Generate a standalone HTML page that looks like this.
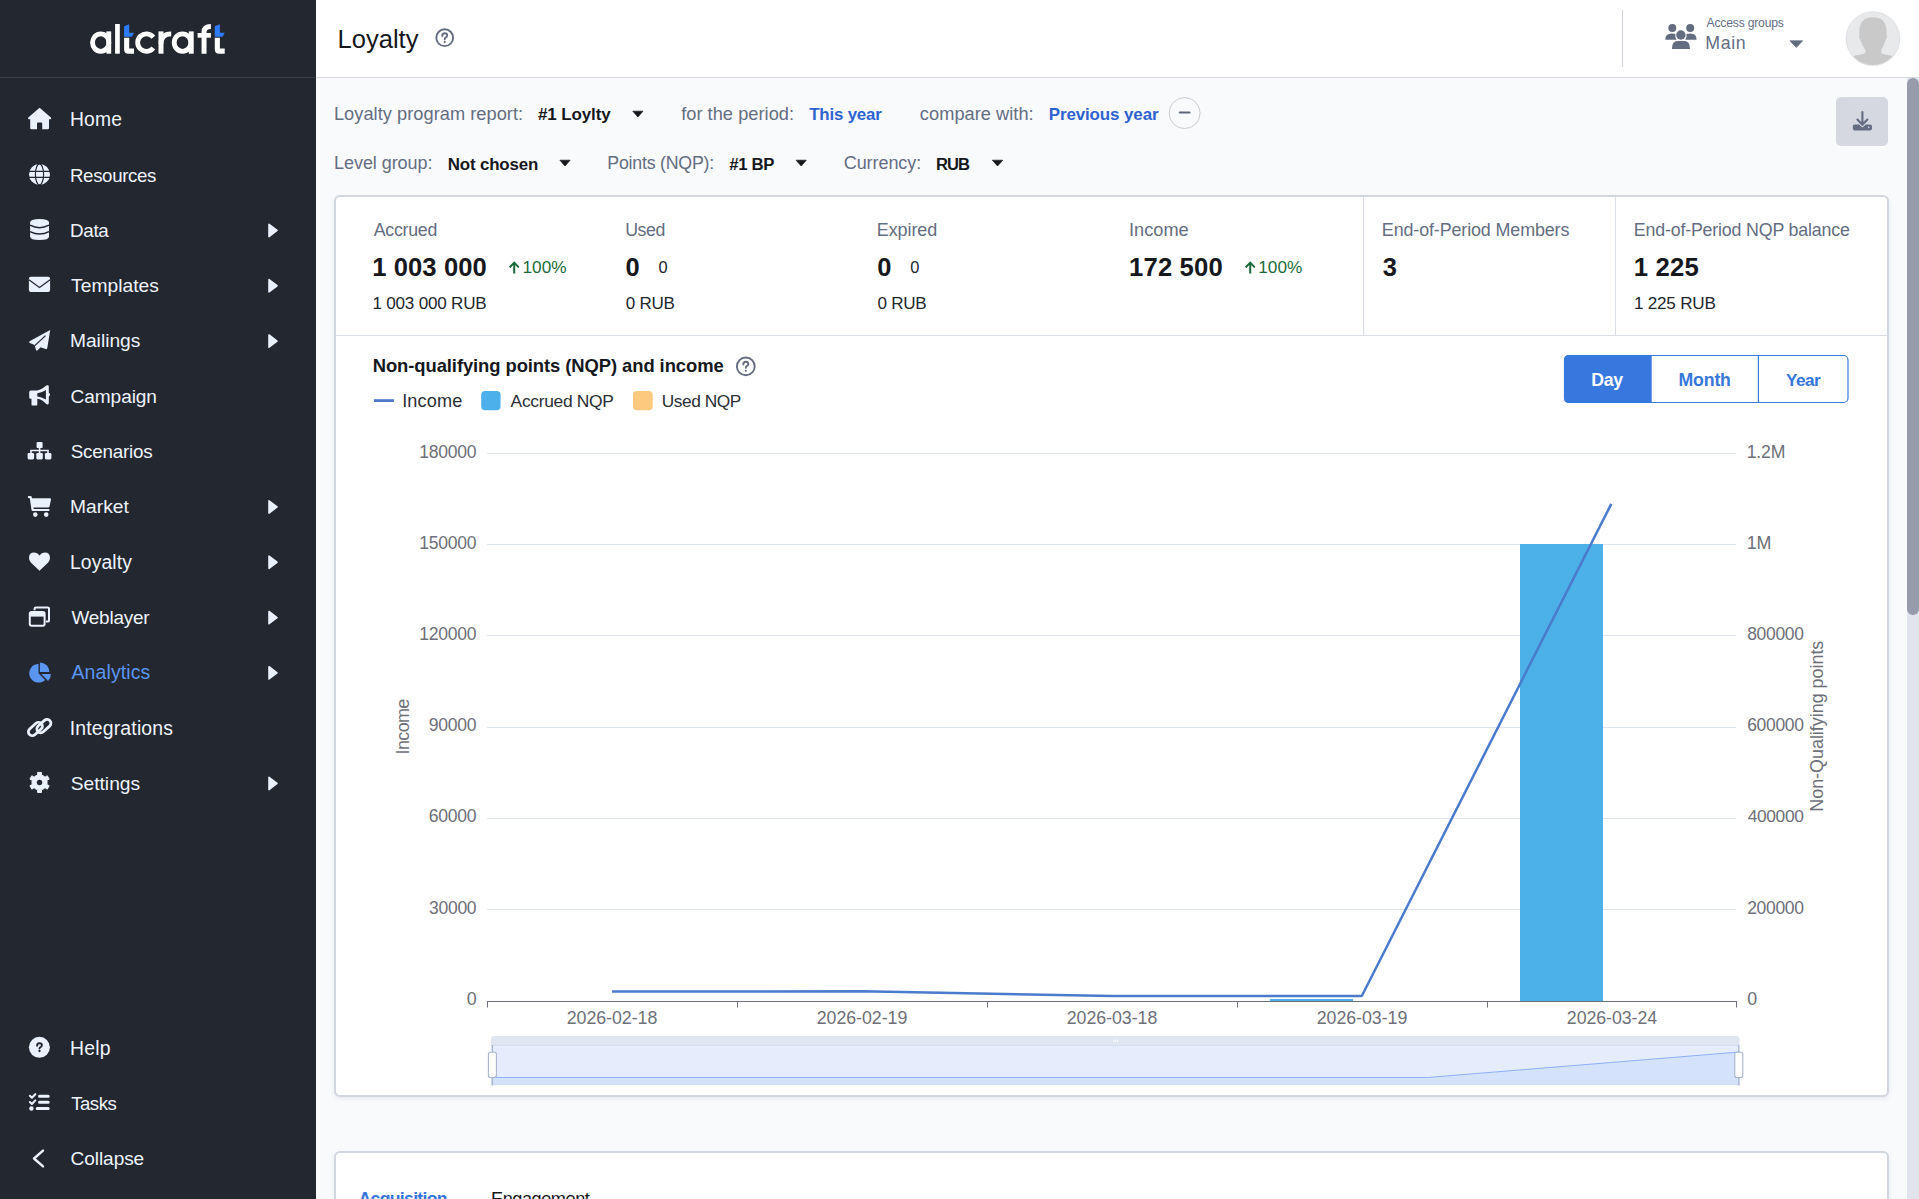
<!DOCTYPE html>
<html lang="en"><head><meta charset="utf-8"><title>Loyalty - Altcraft</title>
<style>
html,body{margin:0;padding:0;}
body{width:1919px;height:1199px;overflow:hidden;position:relative;background:#f9fafc;font-family:"Liberation Sans",sans-serif;}
.sidebar{position:absolute;left:0;top:0;width:316px;height:1199px;background:#232730;}
.sidebar .logo-sep{position:absolute;left:0;top:77px;width:316px;height:1px;background:#3b404b;}
.header{position:absolute;left:316px;top:0;width:1603px;height:77px;background:#fff;border-bottom:1px solid #d6d9e0;}
.dl-btn{position:absolute;left:1836px;top:97px;width:52px;height:49px;border-radius:5px;background:#d5d8e0;}
.card{position:absolute;left:334px;width:1551px;background:#fff;border:2px solid #d2d6de;border-radius:6px;box-shadow:0 2px 4px rgba(40,50,70,.08);}
.card.c1{top:195px;height:898px;}
.card.c2{top:1151px;height:200px;}
.scroll{position:absolute;left:1907px;top:78px;width:12px;height:1121px;background:#e1e4ec;}
.thumb{position:absolute;left:1907px;top:78px;width:12px;height:537px;border-radius:6px;background:#969cab;}
svg.layer{position:absolute;left:0;top:0;font-family:"Liberation Sans",sans-serif;}
</style></head>
<body>
<div class="sidebar"><div class="logo-sep"></div></div>
<div class="header"></div>
<div class="dl-btn"></div>
<div class="card c1"></div>
<div class="card c2"></div>
<div class="scroll"></div><div class="thumb"></div>
<svg class="layer" width="1919" height="1199" viewBox="0 0 1919 1199">
<g id="logo"><ellipse cx="100.7" cy="42.55" rx="8.2" ry="8.75" stroke="#fff" stroke-width="4.8" fill="none"/>
<rect x="106.4" y="31.4" width="4.8" height="22.3" fill="#fff"/>
<rect x="115.1" y="24" width="4.7" height="29.7" fill="#fff"/>
<path fill="#2f7bf7" d="M124.1,26.3 L129.2,24.2 L129.2,32.8 L134.0,32.8 L132.0,36.7 L124.1,36.7 Z"/>
<path fill="#fff" d="M124.1,37.7 L129.2,37.7 L129.2,48.6 L134.0,48.6 L134.0,53.7 L128.6,53.7 Q124.1,53.7 124.1,49.2 Z"/>
<path fill="#2f7bf7" d="M214.8,26.3 L219.9,24.2 L219.9,32.8 L224.70000000000002,32.8 L222.70000000000002,36.7 L214.8,36.7 Z"/>
<path fill="#fff" d="M214.8,37.7 L219.9,37.7 L219.9,48.6 L224.70000000000002,48.6 L224.70000000000002,53.7 L219.3,53.7 Q214.8,53.7 214.8,49.2 Z"/>
<path d="M153.30,37.16 A8.75,8.75 0 1 0 153.30,47.94" stroke="#fff" stroke-width="4.8" fill="none"/>
<rect x="158.5" y="31.4" width="5" height="22.3" fill="#fff"/>
<path d="M161,44 Q161,33.8 171.2,33.8" stroke="#fff" stroke-width="4.8" fill="none"/>
<ellipse cx="182.5" cy="42.55" rx="8.3" ry="8.75" stroke="#fff" stroke-width="4.8" fill="none"/>
<rect x="188.8" y="31.4" width="4.9" height="22.3" fill="#fff"/>
<path d="M204.05,53.7 L204.05,32 Q204.05,26.4 210.9,26.4" stroke="#fff" stroke-width="5" fill="none"/>
<rect x="197.6" y="33" width="13.3" height="4.7" fill="#fff"/></g>
<g id="icons"><path fill="#e9f1fd" d="M39.6,107.8 L50.9,117.6 Q51.7,118.6 50.6,119.2 L49,119.2 L49,128 Q49,129.2 47.8,129.2 L42.2,129.2 L42.2,123.5 Q42.2,122.5 41.2,122.5 L38,122.5 Q37,122.5 37,123.5 L37,129.2 L31.4,129.2 Q30.2,129.2 30.2,128 L30.2,119.2 L28.6,119.2 Q27.5,118.6 28.3,117.6 Z"/>
<circle cx="39.5" cy="174.4" r="10.5" fill="#e9f1fd"/>
<ellipse cx="39.5" cy="174.4" rx="4.1" ry="10.5" fill="none" stroke="#232730" stroke-width="1.15"/>
<path d="M28.0,171.4 L51.0,171.4 M28.0,177.3 L51.0,177.3" stroke="#232730" stroke-width="1.15" fill="none"/>
<path fill="#e9f1fd" d="M30.1,222.5 Q30.1,219 39.55,219 Q49,219 49,222.5 L49,236.5 Q49,240 39.55,240 Q30.1,240 30.1,236.5 Z"/>
<path d="M30.1,225.2 Q39.55,230.2 49,225.2 M30.1,231.6 Q39.55,236.6 49,231.6" stroke="#232730" stroke-width="1.5" fill="none"/>
<rect x="28.9" y="276.8" width="21.2" height="15.1" rx="2" fill="#e9f1fd"/>
<path d="M28.9,279.8 L39.5,287.6 L50.1,279.8" stroke="#232730" stroke-width="1.2" fill="none"/>
<path fill="#e9f1fd" d="M50.2,330 L29.6,341.3 Q28.4,342.4 29.8,343 L34.6,344.9 L36,350 Q36.6,351.2 37.6,350.3 L40.6,347.2 L45.6,349.1 Q47.1,349.4 47.3,348 Z"/>
<path d="M34.8,345.6 L45.5,335.6" stroke="#232730" stroke-width="1.3" fill="none"/>
<path fill="#e9f1fd" fill-rule="evenodd" d="M30.7,390.4 L37.1,390.4 Q42,389.8 46.3,385.6 Q47.2,384.9 48.1,385.3 Q48.8,385.7 48.8,386.6 L48.8,392.8 Q50,393.5 50,394.65 Q50,395.8 48.8,396.5 L48.8,403 Q48.8,404 48,404.4 Q47.1,404.7 46.3,404 Q42,399.3 37.3,398.7 L37.3,404.4 Q37.3,405.6 36.1,405.6 L32.7,405.6 Q31.5,405.6 31.5,404.4 L31.5,398.7 L30.7,398.7 Q29.2,398.7 29.2,397.2 L29.2,391.9 Q29.2,390.4 30.7,390.4 Z M37.3,393.3 Q41.5,392.8 45.9,389.9 L45.9,399.5 Q41.5,396.9 37.3,396.5 Z"/>
<rect x="36.6" y="441.9" width="6" height="6.2" rx="1.2" fill="#e9f1fd"/>
<path d="M39.6,448 L39.6,453 M31,453.5 L31,450.5 L48,450.5 L48,453.5" stroke="#e9f1fd" stroke-width="1.6" fill="none"/>
<rect x="27.6" y="452.9" width="6.5" height="6.5" rx="1.3" fill="#e9f1fd"/>
<rect x="36.3" y="452.9" width="6.5" height="6.5" rx="1.3" fill="#e9f1fd"/>
<rect x="44.9" y="452.9" width="6.5" height="6.5" rx="1.3" fill="#e9f1fd"/>
<path fill="#e9f1fd" d="M28.8,496.1 L30.6,496.1 Q31.6,496.2 31.8,497.2 L31.9,498.2 L50,498.2 Q51.2,498.3 51,499.5 L49.6,506.2 Q49.3,507.6 48,507.6 L33.5,507.6 L33.8,509 L48.6,509 Q49.6,509 49.6,510 Q49.6,511 48.6,511 L32.6,511 Q31.7,511 31.5,510 L29.8,498.2 L28.8,498.2 Q27.8,498.1 27.8,497.1 Q27.8,496.1 28.8,496.1 Z"/>
<circle cx="35.3" cy="514.6" r="2.3" fill="#e9f1fd"/><circle cx="46.2" cy="514.6" r="2.3" fill="#e9f1fd"/>
<path fill="#e9f1fd" d="M39.5,570.7 L30.8,562.5 Q29,560.6 29,558 Q29,552.6 34.3,552.6 Q37.6,552.6 39.5,555.4 Q41.4,552.6 44.7,552.6 Q50,552.6 50,558 Q50,560.6 48.2,562.5 Z"/>
<path d="M34.6,610.2 L34.6,608.6 Q34.6,607.4 35.8,607.4 L47.8,607.4 Q49,607.4 49,608.6 L49,620.4 Q49,621.6 47.8,621.6 L45.9,621.6" stroke="#e9f1fd" stroke-width="2" fill="none"/>
<rect x="29.8" y="612" width="14.8" height="13.8" rx="1.8" stroke="#e9f1fd" stroke-width="2" fill="none"/>
<rect x="29.8" y="612" width="14.8" height="4.6" fill="#e9f1fd"/>
<path fill="#5a95f0" d="M38.5,664 L38.5,673.3 L45.08,679.88 A9.3,9.3 0 1 1 38.5,664 Z"/>
<path fill="#5a95f0" d="M39.9,662.4 A9.6,9.6 0 0 1 49.5,672 L39.9,672 Z"/>
<path fill="#5a95f0" d="M41.3,674.1 L50.9,674.1 A9.6,9.6 0 0 1 48.09,680.89 Z"/>
<g transform="translate(35.4,729.0) rotate(-42)"><rect x="-8.1" y="-3.85" width="16.2" height="7.7" rx="3.85" stroke="#e9f1fd" stroke-width="2.8" fill="none"/></g>
<g transform="translate(43.9,726.1) rotate(-42)"><rect x="-8.1" y="-3.85" width="16.2" height="7.7" rx="3.85" stroke="#e9f1fd" stroke-width="2.8" fill="none"/></g>
<path fill="#e9f1fd" stroke="#e9f1fd" stroke-width="1" stroke-linejoin="round" d="M35.75,775.87 L37.71,775.08 L37.60,772.44 L41.50,772.44 L41.39,775.08 L43.35,775.87 L45.02,777.17 L47.25,775.76 L49.19,779.13 L46.86,780.36 L47.15,782.45 L46.86,784.54 L49.19,785.77 L47.25,789.14 L45.02,787.73 L43.35,789.03 L41.39,789.82 L41.50,792.46 L37.60,792.46 L37.71,789.82 L35.75,789.03 L34.08,787.73 L31.85,789.14 L29.91,785.77 L32.24,784.54 L31.95,782.45 L32.24,780.36 L29.91,779.13 L31.85,775.76 L34.08,777.17 Z"/>
<circle cx="39.55" cy="782.45" r="2.7" fill="#232730"/>
<circle cx="39.4" cy="1047.3" r="10.5" fill="#e9f1fd"/>
<path d="M37.1,1045.7 Q37.1,1043.3 39.5,1043.3 Q41.9,1043.3 41.9,1045.3 Q41.9,1046.5 40.5,1047.1 Q39.5,1047.5 39.5,1048.5" stroke="#232730" stroke-width="1.9" fill="none" stroke-linecap="round"/>
<circle cx="39.5" cy="1051" r="1.15" fill="#232730"/>
<path d="M29.9,1095.8 L31.9,1097.8 L35.3,1094.2 M29.9,1102 L31.9,1104 L35.3,1100.4" stroke="#e9f1fd" stroke-width="2.1" fill="none" stroke-linecap="round" stroke-linejoin="round"/>
<circle cx="31.4" cy="1108.5" r="2.2" fill="#e9f1fd"/>
<path d="M39.5,1096.3 L48.2,1096.3 M39.5,1102.3 L48.2,1102.3 M37.2,1108.5 L48.2,1108.5" stroke="#e9f1fd" stroke-width="3" stroke-linecap="round"/>
<path d="M43,1150.6 L34,1158.5 L43,1166.4" stroke="#e9f1fd" stroke-width="2.4" fill="none" stroke-linecap="round" stroke-linejoin="round"/>
<path fill="#e9f1fd" stroke="#e9f1fd" stroke-width="1.6" stroke-linejoin="round" d="M269,224.35 L277,230.45 L269,236.54999999999998 Z"/>
<path fill="#e9f1fd" stroke="#e9f1fd" stroke-width="1.6" stroke-linejoin="round" d="M269,279.65 L277,285.75 L269,291.85 Z"/>
<path fill="#e9f1fd" stroke="#e9f1fd" stroke-width="1.6" stroke-linejoin="round" d="M269,334.95 L277,341.05 L269,347.15000000000003 Z"/>
<path fill="#e9f1fd" stroke="#e9f1fd" stroke-width="1.6" stroke-linejoin="round" d="M269,500.8499999999999 L277,506.94999999999993 L269,513.05 Z"/>
<path fill="#e9f1fd" stroke="#e9f1fd" stroke-width="1.6" stroke-linejoin="round" d="M269,556.15 L277,562.25 L269,568.35 Z"/>
<path fill="#e9f1fd" stroke="#e9f1fd" stroke-width="1.6" stroke-linejoin="round" d="M269,611.45 L277,617.5500000000001 L269,623.6500000000001 Z"/>
<path fill="#e9f1fd" stroke="#e9f1fd" stroke-width="1.6" stroke-linejoin="round" d="M269,666.75 L277,672.85 L269,678.95 Z"/>
<path fill="#e9f1fd" stroke="#e9f1fd" stroke-width="1.6" stroke-linejoin="round" d="M269,777.3499999999999 L277,783.4499999999999 L269,789.55 Z"/></g>
<g id="misc"><circle cx="444.7" cy="37.7" r="8.4" stroke="#646d80" stroke-width="1.9" fill="none"/>
<path d="M442.2,35.9 Q442.2,33.3 444.7,33.3 Q447.2,33.3 447.2,35.5 Q447.2,36.9 445.6,37.6 Q444.7,38.1 444.7,39.2" stroke="#646d80" stroke-width="1.9" fill="none" stroke-linecap="round"/>
<circle cx="444.7" cy="41.9" r="1.05" fill="#646d80"/>
<rect x="1622" y="10" width="1" height="57" fill="#d3d6de"/>
<g fill="#646d80"><circle cx="1672.3" cy="27.9" r="4"/><circle cx="1690.2" cy="27.9" r="4"/><circle cx="1680.9" cy="35" r="4.7"/><path d="M1665.3,39.8 Q1665.3,33.5 1671.5,33.5 Q1674.5,33.5 1675.4,34 Q1674.8,37.6 1676.6,39.8 Z"/><path d="M1696.6,39.8 Q1696.6,33.5 1690.4,33.5 Q1687.4,33.5 1686.5,34 Q1687.1,37.6 1685.3,39.8 Z"/><path d="M1671.9,48.9 Q1671.9,41.1 1677.6,41.1 L1684.3,41.1 Q1690,41.1 1690,48.9 Z"/></g>
<path d="M1790,40.8 L1802.6,40.8 L1796.3,47.4 Z" fill="#646d80" stroke="#646d80" stroke-width="0.8" stroke-linejoin="round"/>
<circle cx="1872.9" cy="38.65" r="26.8" fill="#e8e9eb" stroke="#d8dbe0" stroke-width="0.8"/>
<clipPath id="avc"><circle cx="1872.9" cy="38.65" r="26.4"/></clipPath>
<g clip-path="url(#avc)" fill="#c9c9c9"><path d="M1859.5,35 Q1858,17.3 1873,17.3 Q1888,17.3 1886.5,35 Q1887.6,36 1886.3,38.5 Q1884,45 1881.3,50 L1881.3,53 Q1884,54.5 1891,55.5 Q1896,57 1900,66 L1846,66 Q1850,57 1855,55.5 Q1862,54.5 1865.3,53 L1865.3,50 Q1862,45 1859.6,38.5 Q1858.3,36 1859.5,35 Z"/></g>
<path d="M632.8,111.2 L643,111.2 L637.9,117.0 Z" fill="#16181d" stroke="#16181d" stroke-width="0.7" stroke-linejoin="round"/>
<path d="M559.9,160.2 L570.1,160.2 L565.0,166.0 Z" fill="#16181d" stroke="#16181d" stroke-width="0.7" stroke-linejoin="round"/>
<path d="M796.1,160.2 L806.3,160.2 L801.2,166.0 Z" fill="#16181d" stroke="#16181d" stroke-width="0.7" stroke-linejoin="round"/>
<path d="M992.3,160.2 L1002.8,160.2 L997.55,166.0 Z" fill="#16181d" stroke="#16181d" stroke-width="0.7" stroke-linejoin="round"/>
<circle cx="1184.6" cy="113.1" r="15.5" fill="none" stroke="#c8ccd4" stroke-width="1"/>
<rect x="1178.7" y="111.4" width="11.8" height="2" rx="1" fill="#5e6678"/>
<path d="M1862.4,112 L1862.4,124.2 M1857.4,119.6 L1862.4,124.8 L1867.4,119.6" stroke="#646d82" stroke-width="2.1" fill="none" stroke-linecap="round" stroke-linejoin="round"/>
<path fill="#646d82" d="M1854.6,124.4 L1859,124.4 L1862.4,127.6 L1865.8,124.4 L1870.2,124.4 Q1872,124.4 1872,126.2 L1872,128.6 Q1872,130.4 1870.2,130.4 L1854.6,130.4 Q1852.8,130.4 1852.8,128.6 L1852.8,126.2 Q1852.8,124.4 1854.6,124.4 Z"/>
<circle cx="1868.8" cy="127.4" r="0.8" fill="#d5d8e0"/>
<path d="M514.2,273.6 L514.2,263 M509.6,267.4 L514.2,262.6 L518.8000000000001,267.4" stroke="#1b6b3a" stroke-width="2" fill="none" stroke-linejoin="miter"/>
<path d="M1250.2,273.6 L1250.2,263 M1245.6000000000001,267.4 L1250.2,262.6 L1254.8,267.4" stroke="#1b6b3a" stroke-width="2" fill="none" stroke-linejoin="miter"/>
<rect x="336" y="335" width="1551" height="1" fill="#dadde3"/>
<rect x="1363" y="197" width="1" height="138" fill="#dadde3"/>
<rect x="1615" y="197" width="1" height="138" fill="#dadde3"/>
<circle cx="745.8" cy="366.4" r="8.9" stroke="#646d80" stroke-width="1.9" fill="none"/>
<path d="M743.3,364.5 Q743.3,361.8 745.8,361.8 Q748.3,361.8 748.3,364.1 Q748.3,365.5 746.7,366.2 Q745.8,366.7 745.8,367.9" stroke="#646d80" stroke-width="1.9" fill="none" stroke-linecap="round"/>
<circle cx="745.8" cy="370.7" r="1.05" fill="#646d80"/>
<rect x="373.9" y="399.2" width="20" height="2.8" fill="#4f78cb"/>
<rect x="481.2" y="391" width="19.4" height="19.2" rx="4" fill="#4cb0ea"/>
<rect x="633" y="391" width="19.7" height="19.2" rx="4" fill="#fcc97e"/>
<rect x="1564.5" y="355.5" width="283.5" height="47" rx="4.5" fill="#fff" stroke="#3b7ddd" stroke-width="1.2"/>
<path d="M1569,355 L1651.7,355 L1651.7,403 L1569,403 Q1564,403 1564,398 L1564,360 Q1564,355 1569,355 Z" fill="#3778de"/>
<rect x="1757.8" y="355.5" width="1.2" height="47" fill="#3b7ddd"/>
<rect x="487" y="453" width="1249" height="1" fill="#e0e6f1"/>
<rect x="487" y="544" width="1249" height="1" fill="#e0e6f1"/>
<rect x="487" y="635" width="1249" height="1" fill="#e0e6f1"/>
<rect x="487" y="727" width="1249" height="1" fill="#e0e6f1"/>
<rect x="487" y="818" width="1249" height="1" fill="#e0e6f1"/>
<rect x="487" y="909" width="1249" height="1" fill="#e0e6f1"/>
<rect x="1520" y="544" width="83" height="457" fill="#4cb1e9"/>
<rect x="1270" y="999" width="83" height="2" fill="#4cb1e9"/>
<rect x="487" y="1001" width="1250" height="1" fill="#6e7079"/>
<rect x="487" y="1002" width="1" height="5.5" fill="#6e7079"/>
<rect x="737" y="1002" width="1" height="5.5" fill="#6e7079"/>
<rect x="987" y="1002" width="1" height="5.5" fill="#6e7079"/>
<rect x="1237" y="1002" width="1" height="5.5" fill="#6e7079"/>
<rect x="1487" y="1002" width="1" height="5.5" fill="#6e7079"/>
<rect x="1736" y="1002" width="1" height="5.5" fill="#6e7079"/>
<polyline points="612,991.5 862,991.3 1112,996 1361.8,996 1611.3,503.9" fill="none" stroke="#4a7bcc" stroke-width="2.5" stroke-linejoin="bevel"/>
<path d="M494,1036 L1736.5,1036 Q1739.5,1036 1739.5,1039 L1739.5,1045.5 L491,1045.5 L491,1039 Q491,1036 494,1036 Z" fill="#dfe5f1"/>
<rect x="491" y="1045.5" width="1248.5" height="39.5" fill="#e5ecfb"/>
<rect x="491" y="1045" width="1248.5" height="0.8" fill="#d2dbef"/>
<path d="M491,1077.5 L1427.5,1077.5 L1739.5,1052 L1739.5,1085 L491,1085 Z" fill="#d4e2fb"/>
<polyline points="491,1077.5 1427.5,1077.5 1739.5,1052" fill="none" stroke="#8fb0f7" stroke-width="1"/>
<rect x="491" y="1084.3" width="1248.5" height="0.8" fill="#d2dbef"/>
<rect x="491.79999999999995" y="1045" width="1.2" height="40.5" fill="#a7b5cc"/>
<rect x="488.4" y="1052.3" width="8" height="25.2" rx="2" fill="#fff" stroke="#a7b5cc" stroke-width="1.1"/>
<rect x="1738.2" y="1045" width="1.2" height="40.5" fill="#a7b5cc"/>
<rect x="1734.8" y="1052.3" width="8" height="25.2" rx="2" fill="#fff" stroke="#a7b5cc" stroke-width="1.1"/>
<rect x="1113.5" y="1039.6" width="0.9" height="2.6" fill="#fff"/>
<rect x="1115.3" y="1039.6" width="0.9" height="2.6" fill="#fff"/>
<rect x="1117.1" y="1039.6" width="0.9" height="2.6" fill="#fff"/></g>
<g id="text"><text x="69.95" y="126.25" font-size="19.32" fill="#eef3fc" textLength="51.98" lengthAdjust="spacing">Home</text>
<text x="70.01" y="181.55" font-size="18.65" fill="#eef3fc" textLength="86.33" lengthAdjust="spacing">Resources</text>
<text x="69.99" y="236.85" font-size="18.83" fill="#eef3fc" textLength="38.81" lengthAdjust="spacing">Data</text>
<text x="71.12" y="292.15" font-size="19.22" fill="#eef3fc" textLength="87.78" lengthAdjust="spacing">Templates</text>
<text x="69.96" y="347.45" font-size="19.19" fill="#eef3fc" textLength="70.42" lengthAdjust="spacing">Mailings</text>
<text x="70.55" y="402.75" font-size="19.08" fill="#eef3fc" textLength="86.44" lengthAdjust="spacing">Campaign</text>
<text x="70.65" y="458.05" font-size="18.84" fill="#eef3fc" textLength="82.11" lengthAdjust="spacing">Scenarios</text>
<text x="69.96" y="513.35" font-size="19.24" fill="#eef3fc" textLength="58.99" lengthAdjust="spacing">Market</text>
<text x="69.95" y="568.65" font-size="19.37" fill="#eef3fc" textLength="62.01" lengthAdjust="spacing">Loyalty</text>
<text x="71.41" y="623.95" font-size="18.91" fill="#eef3fc" textLength="78.23" lengthAdjust="spacing">Weblayer</text>
<text x="71.50" y="679.25" font-size="19.43" fill="#5a95f0" textLength="78.83" lengthAdjust="spacing">Analytics</text>
<text x="69.75" y="734.55" font-size="19.47" fill="#eef3fc" textLength="103.28" lengthAdjust="spacing">Integrations</text>
<text x="70.64" y="789.85" font-size="19.21" fill="#eef3fc" textLength="69.52" lengthAdjust="spacing">Settings</text>
<text x="69.95" y="1055.00" font-size="19.41" fill="#eef3fc" textLength="40.51" lengthAdjust="spacing">Help</text>
<text x="71.13" y="1109.60" font-size="18.59" fill="#eef3fc" textLength="45.67" lengthAdjust="spacing">Tasks</text>
<text x="70.55" y="1165.00" font-size="19.07" fill="#eef3fc" textLength="73.68" lengthAdjust="spacing">Collapse</text>
<text x="337.45" y="47.60" font-size="25.57" fill="#15171c" textLength="81.00" lengthAdjust="spacing">Loyalty</text>
<text x="1706.60" y="26.90" font-size="12.15" fill="#646e82" textLength="77.22" lengthAdjust="spacing">Access groups</text>
<text x="1705.18" y="48.75" font-size="17.76" fill="#646e82" textLength="40.53" lengthAdjust="spacing">Main</text>
<text x="333.94" y="120.00" font-size="18.23" fill="#646e82" textLength="189.19" lengthAdjust="spacing">Loyalty program report:</text>
<text x="537.95" y="120.30" font-size="16.96" fill="#16181d" font-weight="bold" textLength="72.64" lengthAdjust="spacing">#1 Loylty</text>
<text x="681.13" y="120.00" font-size="18.24" fill="#646e82" textLength="112.95" lengthAdjust="spacing">for the period:</text>
<text x="809.23" y="120.30" font-size="16.86" fill="#2e63cf" font-weight="bold" textLength="72.58" lengthAdjust="spacing">This year</text>
<text x="919.87" y="120.00" font-size="18.22" fill="#646e82" textLength="113.78" lengthAdjust="spacing">compare with:</text>
<text x="1048.70" y="120.30" font-size="16.96" fill="#2e63cf" font-weight="bold" textLength="109.85" lengthAdjust="spacing">Previous year</text>
<text x="334.06" y="169.30" font-size="18.02" fill="#646e82" textLength="98.37" lengthAdjust="spacing">Level group:</text>
<text x="447.65" y="169.50" font-size="16.92" fill="#16181d" font-weight="bold" textLength="90.73" lengthAdjust="spacing">Not chosen</text>
<text x="607.33" y="169.30" font-size="17.76" fill="#646e82" textLength="106.87" lengthAdjust="spacing">Points (NQP):</text>
<text x="729.25" y="169.50" font-size="16.73" fill="#16181d" font-weight="bold" textLength="45.04" lengthAdjust="spacing">#1 BP</text>
<text x="843.70" y="169.30" font-size="18.03" fill="#646e82" textLength="77.54" lengthAdjust="spacing">Currency:</text>
<text x="935.92" y="169.50" font-size="16.59" fill="#16181d" font-weight="bold" textLength="34.18" lengthAdjust="spacing">RUB</text>
<text x="373.70" y="235.80" font-size="17.78" fill="#646e82" textLength="63.59" lengthAdjust="spacing">Accrued</text>
<text x="372.16" y="275.80" font-size="25.59" fill="#16181d" font-weight="bold" textLength="114.61" lengthAdjust="spacing">1 003 000</text>
<text x="522.46" y="272.80" font-size="17.20" fill="#1b6b3a" textLength="44.14" lengthAdjust="spacing">100%</text>
<text x="372.42" y="308.70" font-size="17.09" fill="#23262d" textLength="114.29" lengthAdjust="spacing">1 003 000 RUB</text>
<text x="625.17" y="235.80" font-size="17.74" fill="#646e82" textLength="40.16" lengthAdjust="spacing">Used</text>
<text x="625.48" y="275.80" font-size="25.44" fill="#16181d" font-weight="bold">0</text>
<text x="658.54" y="272.90" font-size="16.42" fill="#23262d">0</text>
<text x="625.82" y="308.70" font-size="17.07" fill="#23262d" textLength="48.98" lengthAdjust="spacing">0 RUB</text>
<text x="876.86" y="235.80" font-size="17.99" fill="#646e82" textLength="60.33" lengthAdjust="spacing">Expired</text>
<text x="877.28" y="275.80" font-size="25.44" fill="#16181d" font-weight="bold">0</text>
<text x="910.34" y="272.90" font-size="16.42" fill="#23262d">0</text>
<text x="877.62" y="308.70" font-size="17.07" fill="#23262d" textLength="48.98" lengthAdjust="spacing">0 RUB</text>
<text x="1128.96" y="235.80" font-size="18.20" fill="#646e82" textLength="59.77" lengthAdjust="spacing">Income</text>
<text x="1129.06" y="275.80" font-size="25.66" fill="#16181d" font-weight="bold" textLength="93.69" lengthAdjust="spacing">172 500</text>
<text x="1258.21" y="272.80" font-size="17.20" fill="#1b6b3a" textLength="44.14" lengthAdjust="spacing">100%</text>
<text x="1381.87" y="235.80" font-size="17.92" fill="#646e82" textLength="187.54" lengthAdjust="spacing">End-of-Period Members</text>
<text x="1382.66" y="275.80" font-size="25.44" fill="#16181d" font-weight="bold">3</text>
<text x="1633.77" y="235.80" font-size="17.82" fill="#646e82" textLength="216.11" lengthAdjust="spacing">End-of-Period NQP balance</text>
<text x="1633.66" y="275.80" font-size="25.70" fill="#16181d" font-weight="bold" textLength="65.11" lengthAdjust="spacing">1 225</text>
<text x="1633.92" y="308.70" font-size="17.12" fill="#23262d" textLength="81.97" lengthAdjust="spacing">1 225 RUB</text>
<text x="372.70" y="371.70" font-size="18.43" fill="#16181d" font-weight="bold" textLength="351.00" lengthAdjust="spacing">Non-qualifying points (NQP) and income</text>
<text x="402.17" y="407.00" font-size="18.10" fill="#2b2f36" textLength="60.18" lengthAdjust="spacing">Income</text>
<text x="510.60" y="407.00" font-size="17.40" fill="#2b2f36" textLength="103.24" lengthAdjust="spacing">Accrued NQP</text>
<text x="661.70" y="407.00" font-size="17.30" fill="#2b2f36" textLength="79.66" lengthAdjust="spacing">Used NQP</text>
<text x="1591.35" y="385.80" font-size="17.66" fill="#ffffff" font-weight="bold" textLength="31.84" lengthAdjust="spacing">Day</text>
<text x="1678.55" y="385.80" font-size="17.69" fill="#3677db" font-weight="bold" textLength="52.35" lengthAdjust="spacing">Month</text>
<text x="1785.96" y="385.80" font-size="17.23" fill="#3677db" font-weight="bold" textLength="34.63" lengthAdjust="spacing">Year</text>
<text x="476.65" y="458.00" font-size="17.57" fill="#6e7079" textLength="57.47" lengthAdjust="spacing" text-anchor="end">180000</text>
<text x="476.65" y="549.10" font-size="17.57" fill="#6e7079" textLength="57.47" lengthAdjust="spacing" text-anchor="end">150000</text>
<text x="476.65" y="640.20" font-size="17.57" fill="#6e7079" textLength="57.47" lengthAdjust="spacing" text-anchor="end">120000</text>
<text x="476.63" y="731.30" font-size="17.57" fill="#6e7079" textLength="47.81" lengthAdjust="spacing" text-anchor="end">90000</text>
<text x="476.63" y="822.40" font-size="17.58" fill="#6e7079" textLength="47.91" lengthAdjust="spacing" text-anchor="end">60000</text>
<text x="476.63" y="913.50" font-size="17.55" fill="#6e7079" textLength="47.71" lengthAdjust="spacing" text-anchor="end">30000</text>
<text x="476.65" y="1005.00" font-size="17.88" fill="#6e7079" text-anchor="end">0</text>
<text x="1746.67" y="458.00" font-size="17.68" fill="#6e7079" textLength="38.76" lengthAdjust="spacing">1.2M</text>
<text x="1746.66" y="549.10" font-size="17.88" fill="#6e7079">1M</text>
<text x="1747.21" y="640.20" font-size="17.48" fill="#6e7079" textLength="56.77" lengthAdjust="spacing">800000</text>
<text x="1747.13" y="731.30" font-size="17.49" fill="#6e7079" textLength="56.87" lengthAdjust="spacing">600000</text>
<text x="1747.65" y="822.40" font-size="17.41" fill="#6e7079" textLength="56.29" lengthAdjust="spacing">400000</text>
<text x="1747.13" y="913.50" font-size="17.49" fill="#6e7079" textLength="56.87" lengthAdjust="spacing">200000</text>
<text x="1747.28" y="1005.00" font-size="17.88" fill="#6e7079">0</text>
<text x="612.00" y="1023.50" font-size="17.79" fill="#6e7079" textLength="90.56" lengthAdjust="spacing" text-anchor="middle">2026-02-18</text>
<text x="862.00" y="1023.50" font-size="17.80" fill="#6e7079" textLength="90.66" lengthAdjust="spacing" text-anchor="middle">2026-02-19</text>
<text x="1112.00" y="1023.50" font-size="17.79" fill="#6e7079" textLength="90.56" lengthAdjust="spacing" text-anchor="middle">2026-03-18</text>
<text x="1362.00" y="1023.50" font-size="17.80" fill="#6e7079" textLength="90.66" lengthAdjust="spacing" text-anchor="middle">2026-03-19</text>
<text x="1612.00" y="1023.50" font-size="17.77" fill="#6e7079" textLength="90.28" lengthAdjust="spacing" text-anchor="middle">2026-03-24</text>
<g transform="translate(409,726.6) rotate(-90)"><text x="0" y="0" font-size="17.88" fill="#6e7079" text-anchor="middle" textLength="55.6" lengthAdjust="spacing">Income</text></g>
<g transform="translate(1823,726.2) rotate(-90)"><text x="0" y="0" font-size="17.88" fill="#6e7079" text-anchor="middle" textLength="171" lengthAdjust="spacing">Non-Qualifying points</text></g>
<text x="358.46" y="1205.00" font-size="17.68" fill="#3677db" font-weight="bold" textLength="89.14" lengthAdjust="spacing">Acquisition</text>
<text x="491.04" y="1205.00" font-size="18.19" fill="#16181d" textLength="98.83" lengthAdjust="spacing">Engagement</text></g>
</svg>
</body></html>
